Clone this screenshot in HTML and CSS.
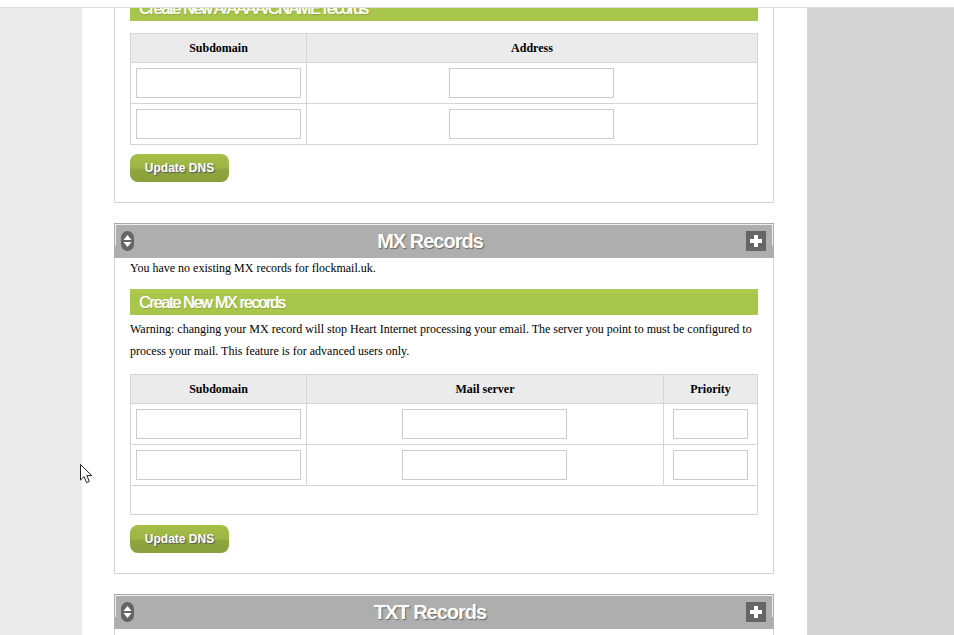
FILE: index.html
```html
<!DOCTYPE html>
<html lang="en">
<head>
<meta charset="utf-8">
<title>DNS</title>
<link rel="stylesheet" href="styles.css">
</head>
<body>
<div class="topbar"></div>
<div class="page">
  <div class="gutter-left"></div>
  <main class="main">
    <section class="panel panel-first">
      <h3 class="bar">Create New A/AAAA/CNAME records</h3>
      <table class="grid">
        <tr><th class="col-sub">Subdomain</th><th>Address</th></tr>
        <tr><td class="col-sub"><input class="field"></td><td class="col-mid"><input class="field"></td></tr>
        <tr><td class="col-sub"><input class="field"></td><td class="col-mid"><input class="field"></td></tr>
      </table>
      <button class="btn">Update DNS</button>
    </section>

    <section class="panel">
      <header class="panel-head">
        <svg class="sort" viewBox="0 0 13 20" width="13" height="20"><rect width="13" height="20" rx="6.5" fill="#666"/><path d="M6.500 4 10.500 9H2.500zM6.500 16 2.500 11H10.500z" fill="#fff"/></svg>
        <h2>MX Records</h2>
        <svg class="plus" viewBox="0 0 20 20" width="20" height="20"><rect width="20" height="20" fill="#666"/><path d="M8 4h4v4h4v4h-4v4H8v-4H4V8h4z" fill="#fff"/></svg>
      </header>
      <p class="lead">You have no existing MX records for flockmail.uk.</p>
      <h3 class="bar">Create New MX records</h3>
      <p class="warn">Warning: changing your MX record will stop Heart Internet processing your email. The server you point to must be configured to process your mail. This feature is for advanced users only.</p>
      <table class="grid">
        <tr><th class="col-sub">Subdomain</th><th>Mail server</th><th class="col-pri">Priority</th></tr>
        <tr><td class="col-sub"><input class="field"></td><td class="col-mid"><input class="field"></td><td class="col-pri"><input class="field field-sm"></td></tr>
        <tr><td class="col-sub"><input class="field"></td><td class="col-mid"><input class="field"></td><td class="col-pri"><input class="field field-sm"></td></tr>
        <tr class="row-empty"><td colspan="3"></td></tr>
      </table>
      <button class="btn">Update DNS</button>
    </section>

    <section class="panel">
      <header class="panel-head">
        <svg class="sort" viewBox="0 0 13 20" width="13" height="20"><rect width="13" height="20" rx="6.5" fill="#666"/><path d="M6.500 4 10.500 9H2.500zM6.500 16 2.500 11H10.500z" fill="#fff"/></svg>
        <h2>TXT Records</h2>
        <svg class="plus" viewBox="0 0 20 20" width="20" height="20"><rect width="20" height="20" fill="#666"/><path d="M8 4h4v4h4v4h-4v4H8v-4H4V8h4z" fill="#fff"/></svg>
      </header>
    </section>
  </main>
  <div class="gutter-right"></div>
</div>
<svg class="cursor" viewBox="0 0 13 20" width="13" height="20"><path d="M.5.5v15.500l3.600-3.400 2.400 6 2.800-1.200-2.500-5.800h5z" fill="#fff" stroke="#222" stroke-width="1"/></svg>
</body>
</html>
```
FILE: styles.css
```css
* { box-sizing: border-box; }
html, body { margin: 0; height: 100%; overflow: hidden; background: #fff; }
body { position: relative; font: 12px/22px "Liberation Serif", "Times New Roman", serif; color: #000; }
.topbar { position: absolute; top: 0; left: 0; right: 0; height: 8px; background: #fff; border-bottom: 1px solid #ddd; z-index: 2; }
.page { display: flex; height: 635px; overflow: hidden; }
.gutter-left { width: 82px; background: #ebebeb; }
.gutter-right { flex: 1; background: #d5d5d5; }
.main { width: 725px; padding: 0 33px 0 32px; background: #fff; }
.panel { border: 1px solid #d5d5d5; padding: 0 15px; margin-bottom: 20px; height: 351px; }
.panel-first { margin-top: -30px; height: 233px; padding-top: 24px; }
.panel-first .grid { margin-top: 12px; }
.panel-first .btn { margin-top: 9px; }
.panel:last-child { height: auto; padding-bottom: 60px; margin-bottom: 0; }
.panel-head { position: relative; display: flex; align-items: center; justify-content: space-between; height: 35px; margin: -1px -16px 0; padding: 1px 8px 1px 7px; background: #aeaeae; border-top: 1px solid #aaa; }
.panel-head::before { content: ""; position: absolute; top: 0; left: 1px; right: 1px; height: 21px; border: 1px solid #fff; border-bottom: 0; opacity: .8; }
.panel-head h2 { margin: 0 20px 0 0; font: bold 20px/34px "Liberation Sans", Arial, sans-serif; letter-spacing: -1px; color: #fff; text-shadow: 1px 1px 1px #666; }
.sort, .plus { position: relative; display: block; }
.lead { margin: 0 0 10px; line-height: 21px; }
.warn { margin: 3px 0 12px; }
.bar { margin: 0; height: 26px; padding: 0 9px; background: linear-gradient(#aecb4e 0 4px, #a9c64c 4px); font: normal 16px/28px "Liberation Sans", Arial, sans-serif; letter-spacing: -1.2px; color: #fff; text-shadow: .5px 0 0 #fff, 1px 1px 1px #8a9f3d; overflow: hidden; }
.grid { width: 628px; margin-top: 13px; border-collapse: collapse; table-layout: fixed; }
.warn + .grid { margin-top: 0; }
.grid th, .grid td { border: 1px solid #d5d5d5; padding: 0; text-align: center; }
.grid th { height: 29px; background: #ebebeb; font: bold 12px/16px "Liberation Serif", "Times New Roman", serif; color: #000; }
.grid td { height: 41px; }
.grid .row-empty td { height: 29px; }
.col-sub { width: 176px; }
.grid .col-mid { padding-right: 2px; }
.col-pri { width: 94px; }
.field { display: block; width: 165px; height: 30px; margin: 0 auto; border: 1px solid #ccc; background: #fff; }
.field-sm { width: 75px; }
.btn { display: block; width: 99px; height: 28px; margin-top: 10px; padding: 0; border: 0; border-radius: 8px; background: linear-gradient(#a5bf47, #9db545 50%, #8fa53f 55%, #8aa03c); font: bold 12px/28px "Liberation Sans", Arial, sans-serif; color: #fff; text-shadow: 1px 1px 1px #555; }
.cursor { position: absolute; left: 80px; top: 464px; z-index: 3; }
```
